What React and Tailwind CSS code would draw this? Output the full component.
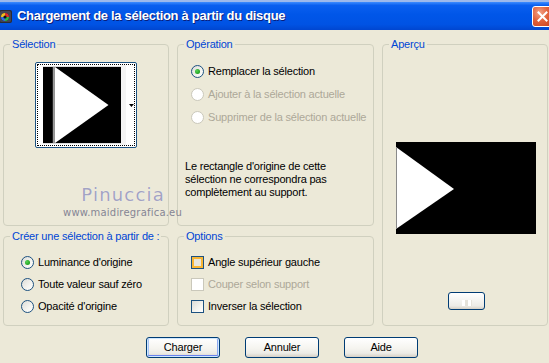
import React from "react";

const FONT = "font-['Liberation_Sans',Arial,sans-serif]";

function Radio({ checked, disabled, label }) {
  return (
    <div className="flex items-center h-[13px] gap-[4px]">
      <span
        className={
          "relative w-[13px] h-[13px] rounded-full border flex items-center justify-center shrink-0 " +
          (disabled
            ? "border-[#CAC8BB] bg-white"
            : "border-[#1C5180] bg-[linear-gradient(135deg,#DCDCD7_0%,#F4F4F0_60%,#FFFFFF_100%)]")
        }
      >
        {checked && (
          <span className="w-[5px] h-[5px] rounded-full bg-[radial-gradient(circle_at_35%_35%,#55D455,#21A121_70%)]" />
        )}
      </span>
      <span className={"whitespace-nowrap " + (disabled ? "text-[#ACA899]" : "text-black")}>{label}</span>
    </div>
  );
}

function Check({ hover, disabled, label }) {
  return (
    <div className="flex items-center h-[13px] gap-[4px]">
      <span
        className={
          "w-[13px] h-[13px] border shrink-0 " +
          (disabled
            ? "border-[#CAC8BB] bg-white"
            : hover
            ? "border-[#1C5180] bg-[#E8E6DC] shadow-[inset_0_0_0_2px_#F8B635]"
            : "border-[#1C5180] bg-[linear-gradient(135deg,#DCDCD7_0%,#F4F4F0_60%,#FFFFFF_100%)]")
        }
      />
      <span className={"whitespace-nowrap " + (disabled ? "text-[#ACA899]" : "text-black")}>{label}</span>
    </div>
  );
}

function Group({ title, className = "", children }) {
  return (
    <fieldset className={"border border-[#D0D0BF] rounded-[4px] min-w-0 " + className}>
      <legend className="ml-[6px] px-[2px] text-[#0046D5] leading-[13px] whitespace-nowrap">{title}</legend>
      {children}
    </fieldset>
  );
}

function Btn({ children, def }) {
  return (
    <button
      className={
        "w-[74px] h-[21px] rounded-[3px] border border-[#003C74] text-black leading-[19px] bg-[linear-gradient(to_bottom,#FFFFFF_0%,#F5F4EF_55%,#ECEBE6_80%,#D6D0C5_100%)] " +
        (def ? "shadow-[inset_0_0_0_1px_#CEE7FF,inset_0_-2px_0_0_#6982EE,inset_2px_0_0_0_#A9C5F7,inset_-2px_0_0_0_#8DA9F0]" : "")
      }
    >
      {children}
    </button>
  );
}

export default function App() {
  return (
    <div className={"relative w-[549px] h-[363px] overflow-hidden bg-[#ECE9D8] text-[11px] tracking-[-0.2px] " + FONT}>
      {/* Title bar */}
      <div className="h-[30px] flex flex-col">
        <div className="h-[2px] bg-[#9DB9EB]" />
        <div className="flex-1 flex items-center bg-[linear-gradient(to_bottom,#3D8CFF_0%,#0A5FEF_12%,#0056E8_45%,#0053E4_80%,#0046D0_100%)]">
          <svg width="14" height="15" viewBox="0 0 14 15" className="ml-[-1px] mt-[1px]">
            <rect x="0" y="1" width="13" height="13" rx="2" fill="#2B2B33" />
            <rect x="1" y="2" width="11" height="11" rx="1.5" fill="#444452" />
            <circle cx="6" cy="8" r="4" fill="#111" />
            <path d="M6 4 A4 4 0 0 1 10 8 L6 8Z" fill="#E0302A" />
            <path d="M10 8 A4 4 0 0 1 6 12 L6 8Z" fill="#2DB84A" />
            <path d="M6 12 A4 4 0 0 1 2 8 L6 8Z" fill="#2F6FE0" />
            <path d="M2 8 A4 4 0 0 1 6 4 L6 8Z" fill="#F0C020" />
            <circle cx="6" cy="8" r="1.6" fill="#111" />
          </svg>
          <span className="ml-[4px] text-white font-bold text-[13px] tracking-[-0.3px] font-['Liberation_Sans',sans-serif] [text-shadow:1px_1px_0_#0A1E7A]">
            Chargement de la sélection à partir du disque
          </span>
          <div className="ml-auto mr-[-4px] mt-[1px] w-[21px] h-[21px] rounded-[3px] border border-white bg-[radial-gradient(circle_at_35%_30%,#F2A287_0%,#E2623C_45%,#C8401E_100%)] flex items-center justify-center">
            <svg width="11" height="11" viewBox="0 0 11 11">
              <path d="M1.5 1.5 L9.5 9.5 M9.5 1.5 L1.5 9.5" stroke="white" strokeWidth="2" strokeLinecap="square" />
            </svg>
          </div>
        </div>
      </div>

      {/* Body */}
      <div className="flex flex-col pl-[3px] pt-[8px]">
        <div className="flex gap-[8px]">
          <div className="w-[166px] flex flex-col gap-[4px]">
            <Group title="Sélection" className="h-[188px]">
              <div className="mt-[11px] flex justify-center">
                <div className="w-[102px] h-[86px] rounded-[2px] border border-[#1C5180] bg-white p-[1px]">
                  <div className="w-full h-full border border-dotted border-black relative flex items-center">
                    <svg width="80" height="78" viewBox="0 0 80 78" className="ml-[5px]">
                      <rect x="0" y="0" width="80" height="78" fill="black" />
                      <rect x="10" y="0" width="2" height="78" fill="#9A9A9A" />
                      <polygon points="12,0 67,39 12,78" fill="white" />
                    </svg>
                    <div className="w-[5px] h-full bg-[#F4F4F4]" />
                    <svg width="5" height="3" viewBox="0 0 5 3" className="ml-[3px]">
                      <polygon points="0,0 5,0 2.5,3" fill="black" />
                    </svg>
                  </div>
                </div>
              </div>
            </Group>
            <Group title="Créer une sélection à partir de :" className="h-[96px]">
              <div className="pl-[17px] mt-[13px] flex flex-col gap-[9px]">
                <Radio checked label="Luminance d'origine" />
                <Radio label="Toute valeur sauf zéro" />
                <Radio label="Opacité d'origine" />
              </div>
            </Group>
          </div>

          <div className="w-[197px] flex flex-col gap-[4px]">
            <Group title="Opération" className="h-[188px]">
              <div className="pl-[13px] mt-[14px] flex flex-col gap-[10px]">
                <Radio checked label="Remplacer la sélection" />
                <Radio disabled label="Ajouter à la sélection actuelle" />
                <Radio disabled label="Supprimer de la sélection actuelle" />
              </div>
              <p className="pl-[7px] mt-[36px] leading-[13px] text-black w-[160px]">
                Le rectangle d'origine de cette sélection ne correspondra pas complètement au support.
              </p>
            </Group>
            <Group title="Options" className="h-[96px]">
              <div className="pl-[13px] mt-[13px] flex flex-col gap-[9px]">
                <Check hover label="Angle supérieur gauche" />
                <Check disabled label="Couper selon support" />
                <Check label="Inverser la sélection" />
              </div>
            </Group>
          </div>

          <Group title="Aperçu" className="w-[166px] h-[288px]">
            <div className="flex flex-col items-center">
              <svg width="140" height="92" viewBox="0 0 140 92" className="mt-[91px] ml-[2px]">
                <rect x="0" y="0" width="140" height="92" fill="black" />
                <polygon points="0,5 58,47 0,87" fill="white" />
                <rect x="0" y="5" width="1" height="82" fill="#8A8A8A" />
              </svg>
              <div className="mt-[58px] ml-[3px] w-[37px] h-[18px] rounded-[3px] border border-[#003C74] bg-[linear-gradient(to_bottom,#FFFFFF,#ECEBE6_80%,#D6D0C5)] flex items-center justify-center">
                <div className="w-[10px] h-[6px] mt-[4px] bg-[repeating-linear-gradient(90deg,#FFFFFF_0_3px,#E4E2DA_3px_6px)]" />
              </div>
            </div>
          </Group>
        </div>

        <div className="mt-[11px] flex gap-[25px] pl-[143px]">
          <Btn def>Charger</Btn>
          <Btn>Annuler</Btn>
          <Btn>Aide</Btn>
        </div>
      </div>

      {/* Watermark */}
      <div className="absolute left-[62px] top-[184px] w-[120px] flex flex-col items-end pointer-events-none">
        <span className="mr-[17px] text-[18px] leading-[22px] tracking-[1.2px] text-[#A3A3C2] font-['DejaVu_Sans',sans-serif] [text-shadow:0_0_1px_#FFFFFF]">
          Pinuccia
        </span>
        <span className="mt-[1px] text-[10px] leading-[12px] tracking-[0.2px] text-[#858594] font-['DejaVu_Sans',sans-serif]">
          www.maidiregrafica.eu
        </span>
      </div>
    </div>
  );
}
